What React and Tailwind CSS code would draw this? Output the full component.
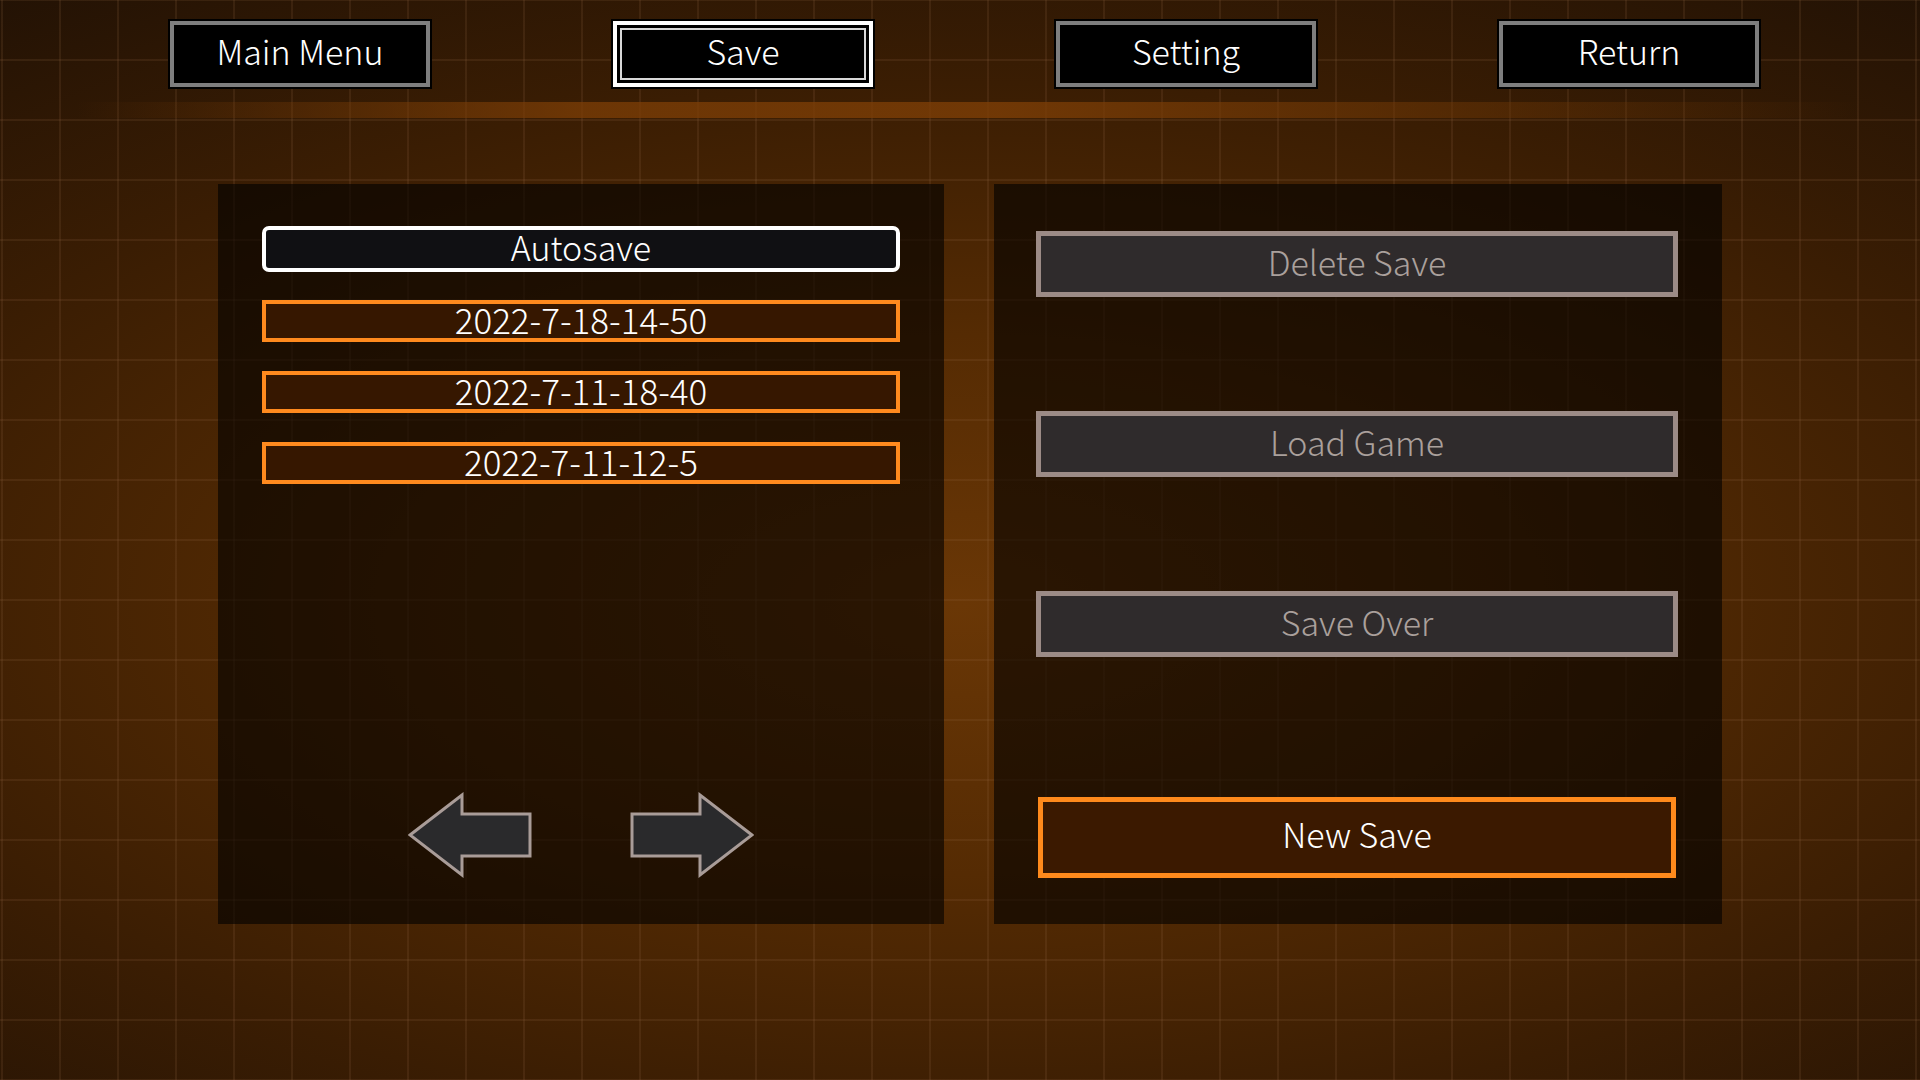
import { useState } from "react";

const FONT = "font-['Noto_Sans_CJK_SC','Noto_Sans',sans-serif]";

const TABS = ["Main Menu", "Save", "Setting", "Return"];
const SAVES = ["2022-7-18-14-50", "2022-7-11-18-40", "2022-7-11-12-5"];
const ACTIONS = ["Delete Save", "Load Game", "Save Over"];

// page arrow, drawn as one outlined polygon
function Arrow({ flip }) {
  return (
    <svg
      width="124"
      height="86"
      viewBox="0 0 124 86"
      className={flip ? "-scale-x-100" : ""}
    >
      <polygon
        points="2,43 54,3 54,22 122,22 122,64 54,64 54,83"
        fill="#2a2a2c"
        stroke="#a99c98"
        strokeWidth="3"
        strokeLinejoin="miter"
      />
    </svg>
  );
}

function TabButton({ label, active, onClick }) {
  if (active) {
    return (
      <button
        onClick={onClick}
        className="w-[260px] h-[66px] bg-black border-[4px] border-white outline-2 outline-black p-[3px]"
      >
        <div className="w-full h-full border-2 border-[#d8d8d8] flex items-center justify-center pb-[6px] text-white text-[34px] font-light leading-none">
          {label}
        </div>
      </button>
    );
  }
  return (
    <button
      onClick={onClick}
      className="w-[260px] h-[66px] bg-black border-[4px] border-[#7e7e7e] outline-2 outline-black flex items-center justify-center pb-[6px] text-white text-[34px] font-light leading-none"
    >
      {label}
    </button>
  );
}

export default function App() {
  const [tab, setTab] = useState("Save");

  return (
    <div
      className={`${FONT} w-[1920px] h-[1080px] overflow-hidden flex flex-col bg-[#1a0e05] bg-[image:linear-gradient(to_right,rgba(150,105,70,0.16)_2px,transparent_2px),linear-gradient(to_bottom,rgba(150,105,70,0.16)_2px,transparent_2px),radial-gradient(ellipse_95%_78%_at_50%_56%,#6a3706_0%,#552b03_32%,#3a1d03_62%,#1a0e05_100%)] bg-[length:58px_60px,58px_60px,100%_100%] bg-[position:1px_-1px,1px_-1px,0_0]`}
    >
      {/* top tabs */}
      <div className="flex gap-[183px] pl-[170px] pt-[21px]">
        {TABS.map((t) => (
          <TabButton
            key={t}
            label={t}
            active={tab === t}
            onClick={() => setTab(t)}
          />
        ))}
      </div>

      {/* glowing strip under the tabs */}
      <div className="mt-[15px] h-[16px] bg-[linear-gradient(to_right,rgba(120,60,5,0)_4%,rgba(125,62,6,0.75)_30%,rgba(125,62,6,0.8)_52%,rgba(110,55,5,0.45)_78%,rgba(90,45,5,0)_97%)]" />

      <div className="flex gap-[50px] pl-[218px] mt-[66px]">
        {/* save list */}
        <div className="w-[726px] h-[740px] bg-black/60 flex flex-col px-[44px] pt-[42px] pb-[46px]">
          <button className="h-[46px] w-full bg-[#101013] border-[4px] border-white rounded-[7px] flex items-center justify-center pb-[5px] text-white text-[34px] font-light leading-none">
            Autosave
          </button>
          <div className="flex flex-col gap-[29px] mt-[28px]">
            {SAVES.map((s) => (
              <button
                key={s}
                className="h-[42px] w-full bg-[#361700] border-[4px] border-[#ff8a1e] flex items-center justify-center pb-[5px] text-white text-[35px] font-light leading-none"
              >
                {s}
              </button>
            ))}
          </div>
          <div className="mt-auto flex justify-center gap-[98px]">
            <Arrow />
            <Arrow flip />
          </div>
        </div>

        {/* actions */}
        <div className="w-[728px] h-[740px] bg-black/60 flex flex-col pl-[42px] pr-[44px] pt-[47px] pb-[46px]">
          <div className="flex flex-col gap-[114px]">
            {ACTIONS.map((a) => (
              <button
                key={a}
                className="h-[66px] w-full bg-[#2f2b2c] border-[5px] border-[#9c8b86] flex items-center justify-center pb-[5px] text-[#aaa09c] text-[34px] font-light leading-none"
              >
                {a}
              </button>
            ))}
          </div>
          <button className="mt-auto mx-[2px] h-[81px] bg-[#3b1900] border-[5px] border-[#ff8a1c] flex items-center justify-center pb-[8px] text-white text-[34px] font-light leading-none">
            New Save
          </button>
        </div>
      </div>
    </div>
  );
}
